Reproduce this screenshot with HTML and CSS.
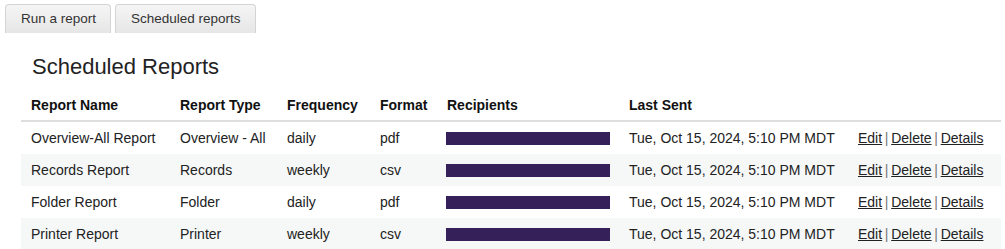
FILE: index.html
```html
<!DOCTYPE html>
<html lang="en">
<head>
    <meta charset="UTF-8">
    <title>Scheduled Reports</title>
    <link rel="stylesheet" href="styles.css">
</head>
<body>

<div class="tabs">
    <a class="tab" href="#">Run a report</a>
    <a class="tab active" href="#">Scheduled reports</a>
</div>

<div class="content">
    <h2>Scheduled Reports</h2>

    <table class="reports">
        <colgroup>
            <col style="width: 149px">
            <col style="width: 107px">
            <col style="width: 93px">
            <col style="width: 67px">
            <col style="width: 182px">
            <col style="width: 229px">
            <col>
        </colgroup>
        <thead>
            <tr>
                <th>Report Name</th>
                <th>Report Type</th>
                <th>Frequency</th>
                <th>Format</th>
                <th>Recipients</th>
                <th>Last Sent</th>
                <th></th>
            </tr>
        </thead>
        <tbody>
            <tr>
                <td>Overview-All Report</td>
                <td>Overview - All</td>
                <td>daily</td>
                <td>pdf</td>
                <td><span class="redacted"></span></td>
                <td>Tue, Oct 15, 2024, 5:10 PM MDT</td>
                <td class="actions"><a href="#">Edit</a> | <a href="#">Delete</a> | <a href="#">Details</a></td>
            </tr>
            <tr>
                <td>Records Report</td>
                <td>Records</td>
                <td>weekly</td>
                <td>csv</td>
                <td><span class="redacted"></span></td>
                <td>Tue, Oct 15, 2024, 5:10 PM MDT</td>
                <td class="actions"><a href="#">Edit</a> | <a href="#">Delete</a> | <a href="#">Details</a></td>
            </tr>
            <tr>
                <td>Folder Report</td>
                <td>Folder</td>
                <td>daily</td>
                <td>pdf</td>
                <td><span class="redacted"></span></td>
                <td>Tue, Oct 15, 2024, 5:10 PM MDT</td>
                <td class="actions"><a href="#">Edit</a> | <a href="#">Delete</a> | <a href="#">Details</a></td>
            </tr>
            <tr>
                <td>Printer Report</td>
                <td>Printer</td>
                <td>weekly</td>
                <td>csv</td>
                <td><span class="redacted"></span></td>
                <td>Tue, Oct 15, 2024, 5:10 PM MDT</td>
                <td class="actions"><a href="#">Edit</a> | <a href="#">Delete</a> | <a href="#">Details</a></td>
            </tr>
        </tbody>
    </table>
</div>

</body>
</html>
```

FILE: styles.css
```css
/* Base page: no margin, Arial-width sans */
body {
    margin: 0;
    font-family: "Liberation Sans", Arial, sans-serif;
    font-size: 14px;
    color: #222;
    background: #fff;
}

/* Tab strip along the top */
.tabs {
    display: flex;
    gap: 4px;
    padding: 4px 0 0 5px;
}

.tab {
    display: block;
    height: 29px;
    line-height: 28px;
    padding: 0 14px 0 15px;
    font-size: 13.5px;
    color: #333;
    text-decoration: none;
    background: linear-gradient(#f5f5f5, #e6e6e6);
    border: 1px solid #d4d4d4;
    border-bottom: none;
    border-radius: 4px 4px 0 0;
    box-sizing: border-box;
}

/* Page body under the tabs */
.content {
    padding: 21px 4px 0 21px;
}

.content h2 {
    margin: 0 0 10px 11px;
    font-size: 22px;
    font-weight: normal;
    line-height: 25px;
    color: #222;
}

/* Reports table */
.reports {
    width: 980px;
    border-collapse: collapse;
    table-layout: fixed;
}

.reports th,
.reports td {
    padding: 0 10px;
    text-align: left;
    white-space: nowrap;
    height: 32px;
}

.reports th {
    font-weight: bold;
    color: #111;
    border-bottom: 2px solid #dedede;
    height: 31px;
}

.reports tbody tr:nth-child(even) {
    background: #f6f8f8;
}

/* Hidden email addresses */
.redacted {
    display: block;
    width: 164px;
    height: 13px;
    margin-left: -1px;
    background: #35205a;
}

.actions {
    color: #777;
    word-spacing: -1.2px;
}

.actions a {
    color: #222;
    text-decoration: underline;
    word-spacing: normal;
}
```
